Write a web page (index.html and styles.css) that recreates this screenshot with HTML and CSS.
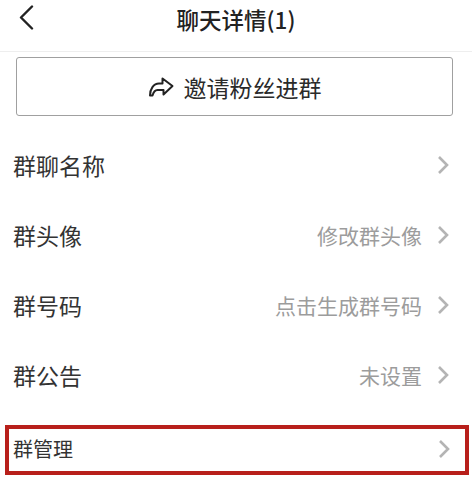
FILE: index.html
```html
<!DOCTYPE html>
<html lang="zh">
<head>
<meta charset="utf-8">
<title>聊天详情</title>
<link rel="stylesheet" href="styles.css">
</head>
<body>
<header class="header">
  <svg class="back" width="16" height="26" viewBox="0 0 16 26"><path d="M14 1.5 L3 12.5 L14 23.5" fill="none" stroke="#222" stroke-width="2.4" stroke-linecap="round" stroke-linejoin="round"/></svg>
  <h1 class="title">聊天详情(1)</h1>
</header>
<button class="invite">
  <svg class="share" width="26" height="22" viewBox="0 0 26 22"><path d="M14.5 2.5 L24.5 10 L15.5 18.5 L15.5 14 L9.5 14 C7 14 5.5 16 4.5 19.5 L2 19.5 C2 13 5.5 7.5 11 7.5 L14.5 7.5 Z" fill="none" stroke="#222" stroke-width="2" stroke-linejoin="round"/></svg>
  <span>邀请粉丝进群</span>
</button>
<main class="list">
  <div class="row"><span class="label">群聊名称</span><svg class="chev" width="12" height="20" viewBox="0 0 12 20"><path d="M2 2 L10 10 L2 18" fill="none" stroke="#b4b4b4" stroke-width="2.6"/></svg></div>
  <div class="row"><span class="label">群头像</span><span class="value">修改群头像</span><svg class="chev" width="12" height="20" viewBox="0 0 12 20"><path d="M2 2 L10 10 L2 18" fill="none" stroke="#b4b4b4" stroke-width="2.6"/></svg></div>
  <div class="row"><span class="label">群号码</span><span class="value">点击生成群号码</span><svg class="chev" width="12" height="20" viewBox="0 0 12 20"><path d="M2 2 L10 10 L2 18" fill="none" stroke="#b4b4b4" stroke-width="2.6"/></svg></div>
  <div class="row"><span class="label">群公告</span><span class="value">未设置</span><svg class="chev" width="12" height="20" viewBox="0 0 12 20"><path d="M2 2 L10 10 L2 18" fill="none" stroke="#b4b4b4" stroke-width="2.6"/></svg></div>
  <div class="row row-highlight"><span class="label">群管理</span><svg class="chev" width="12" height="20" viewBox="0 0 12 20"><path d="M2 2 L10 10 L2 18" fill="none" stroke="#b4b4b4" stroke-width="2.6"/></svg></div>
</main>
</body>
</html>
```
FILE: styles.css
```css
html, body {
  margin: 0;
  padding: 0;
  background: #fff;
  font-family: "Noto Sans CJK SC", "Noto Sans", sans-serif;
  overflow: hidden;
}
.header {
  height: 51px;
  border-bottom: 1px solid #eeeeee;
  display: flex;
  align-items: center;
  justify-content: center;
  position: relative;
  box-sizing: content-box;
}
.back {
  position: absolute;
  left: 18px;
  top: 5px;
}
.title {
  margin: 0 0 13px;
  font-size: 22.5px;
  font-weight: 500;
  color: #222;
  line-height: 28px;
}
.invite {
  display: flex;
  align-items: center;
  justify-content: center;
  gap: 10px;
  width: 437px;
  height: 59px;
  margin: 5px 0 0 16px;
  padding: 0;
  background: #fff;
  border: 1.5px solid #a0a0a0;
  border-radius: 3px;
  font-family: inherit;
  font-size: 23px;
  color: #2a2a2a;
}
.list {
  margin-top: 14px;
}
.row {
  height: 70px;
  display: flex;
  align-items: center;
  padding: 0 23px 0 13px;
}
.label {
  flex: 1;
  font-size: 23px;
  color: #333;
}
.value {
  font-size: 21px;
  color: #9c9c9c;
  margin-right: 15px;
}
.chev {
  flex: none;
}
.row-highlight {
  box-sizing: border-box;
  height: 50px;
  margin: 15px 3px 0 5px;
  padding: 0 15px 3px 4px;
  border: 4px solid #b8201b;
}
.row-highlight .label {
  font-size: 20px;
}
```
